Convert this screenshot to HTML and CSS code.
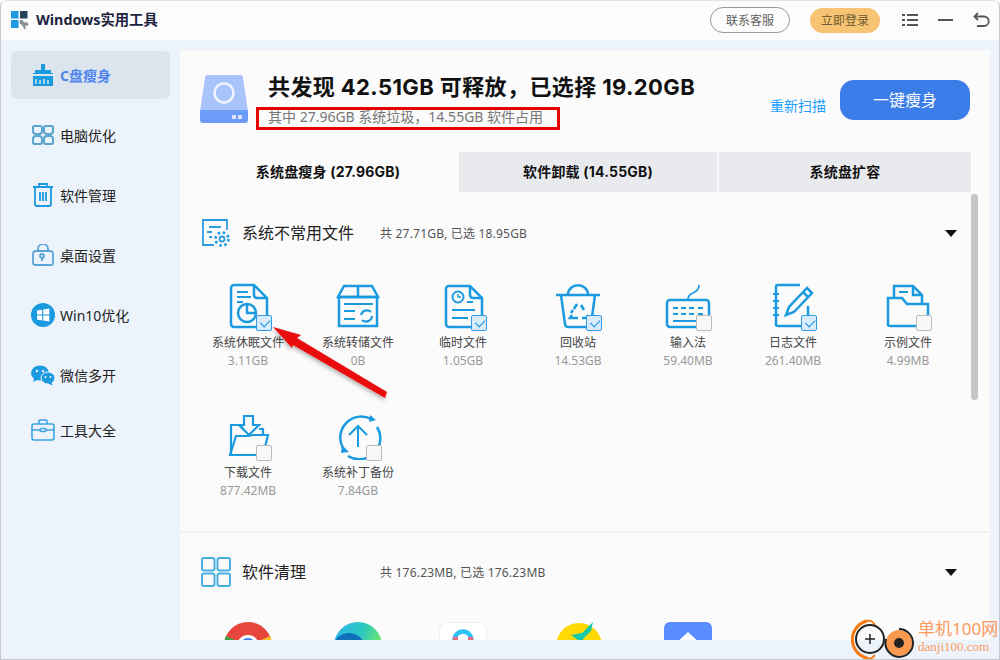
FILE: index.html
```html
<!DOCTYPE html>
<html lang="zh-CN">
<head>
  <meta charset="UTF-8">
  <title>Windows实用工具</title>
  <link rel="stylesheet" href="styles.css">
</head>
<body>
<div class="window">

  <header class="titlebar">
    <svg class="logo" width="20" height="20" viewBox="0 0 20 20">
      <rect x="1" y="1" width="7.5" height="7.5" fill="#1b9ae0"/>
      <rect x="10" y="1" width="7.5" height="7.5" fill="#23435f"/>
      <rect x="1" y="10" width="7.5" height="8" fill="#1b9ae0"/>
      <path d="M10 10l2 0 2.5 2.5 2-.5 2 2-1 2-2-.5-.5.5 1 2.500-1.500 1-2.500-4.500-2.500-1.500z" fill="#8a8f96"/>
    </svg>
    <span class="app-name">Windows实用工具</span>
    <a class="pill pill-line">联系客服</a>
    <a class="pill pill-gold">立即登录</a>
    <svg class="tb-icon" width="18" height="14" viewBox="0 0 18 14" fill="#555">
      <rect x="1" y="1" width="3" height="2"/><rect x="6" y="1" width="11" height="2"/>
      <rect x="1" y="6" width="3" height="2"/><rect x="6" y="6" width="11" height="2"/>
      <rect x="1" y="11" width="3" height="2"/><rect x="6" y="11" width="11" height="2"/>
    </svg>
    <svg class="tb-icon tb-min" width="16" height="14" viewBox="0 0 16 14"><rect x="0" y="6" width="15" height="2" fill="#555"/></svg>
    <svg class="tb-icon tb-back" width="17" height="16" viewBox="0 0 17 16" fill="none" stroke="#555" stroke-width="1.800">
      <path d="M5 1L1.500 4.500 5 8"/><path d="M2 4.500h9a4.500 4.500 0 0 1 0 9.500H4"/>
    </svg>
  </header>

  <div class="content">
    <nav class="sidebar">
      <a class="nav-item active">
        <svg width="22" height="24" viewBox="0 0 22 24"><path d="M9 1h4v6h6v3H3V7h6z" fill="#1b9ae0"/><path d="M1 10h20v13H1z" fill="#1b9ae0"/><path d="M4 21v-5M8 21v-4M12 21v-5M16 21v-4" stroke="#dbe6f0" stroke-width="1.500"/><rect x="1" y="11" width="20" height="2" fill="#dce4ed"/></svg>
        <span>C盘瘦身</span>
      </a>
      <a class="nav-item">
        <svg width="22" height="22" viewBox="0 0 22 22" fill="none" stroke="#5aa5cd" stroke-width="2"><path d="M2 2h6a2 2 0 0 1 2 2v3a3 3 0 0 1-3 3H4a3 3 0 0 1-3-3V3z"/><path d="M20 2h-6a2 2 0 0 0-2 2v3a3 3 0 0 0 3 3h3a3 3 0 0 0 3-3V3z"/><path d="M2 20h6a2 2 0 0 0 2-2v-3a3 3 0 0 0-3-3H4a3 3 0 0 0-3 3v4z"/><path d="M20 20h-6a2 2 0 0 1-2-2v-3a3 3 0 0 1 3-3h3a3 3 0 0 1 3 3v4z"/></svg>
        <span>电脑优化</span>
      </a>
      <a class="nav-item">
        <svg width="22" height="24" viewBox="0 0 22 24" fill="none" stroke="#1b9ae0" stroke-width="1.800"><path d="M1 4h20M7 4V1h8v3M3 4v17a2 2 0 0 0 2 2h12a2 2 0 0 0 2-2V4M8 9v9M11 9v9M14 9v9"/></svg>
        <span>软件管理</span>
      </a>
      <a class="nav-item">
        <svg width="22" height="22" viewBox="0 0 22 22" fill="none" stroke="#5aa5d8" stroke-width="1.800"><path d="M6 7V5a5 5 0 0 1 10 0v2"/><path d="M4 7h14a3 3 0 0 1 3 3v9a2 2 0 0 1-2 2H3a2 2 0 0 1-2-2v-9a3 3 0 0 1 3-3z"/><circle cx="10" cy="12" r="2"/><path d="M10 14v3"/></svg>
        <span>桌面设置</span>
      </a>
      <a class="nav-item">
        <svg class="nav-win" width="24" height="24" viewBox="0 0 24 24"><circle cx="12" cy="12" r="12" fill="#1b9ae0"/><path d="M6 7.500l5.200-.8v4.800H6zM12.300 6.500l6-.9v5.900h-6zM6 12.600h5.200v4.800L6 16.600zM12.300 12.600h6v5.900l-6-.9z" fill="#fff"/></svg>
        <span>Win10优化</span>
      </a>
      <a class="nav-item">
        <svg class="nav-win" width="24" height="21" viewBox="0 0 24 21" fill="#1b9ae0"><ellipse cx="9" cy="8" rx="9" ry="7.500"/><path d="M3 12l-.5 5 5-3z"/><ellipse cx="17" cy="13" rx="7" ry="6" stroke="#edf3fb" stroke-width="1"/><path d="M20 17l2 3.500-5-2z"/><circle cx="6" cy="6" r="1.200" fill="#edf3fb"/><circle cx="12" cy="6" r="1.200" fill="#edf3fb"/><circle cx="14.500" cy="12" r="1" fill="#edf3fb"/><circle cx="19.500" cy="12" r="1" fill="#edf3fb"/></svg>
        <span>微信多开</span>
      </a>
      <a class="nav-item nav-last">
        <svg class="nav-win" width="24" height="22" viewBox="0 0 24 22" fill="none" stroke="#3aa5e5" stroke-width="1.600"><path d="M8 5V2a1 1 0 0 1 1-1h6a1 1 0 0 1 1 1v3"/><rect x="1" y="5" width="22" height="16" rx="2"/><path d="M1 11h8M15 11h8"/><rect x="9" y="9.500" width="6" height="3" rx="1.500"/></svg>
        <span>工具大全</span>
      </a>
    </nav>

    <main class="main">
      <section class="summary">
        <svg class="disk" width="48" height="48" viewBox="0 0 48 48">
          <path d="M5 3a3 3 0 0 1 3-3h32a3 3 0 0 1 3 3l5 33H0z" fill="#a9c4fb"/>
          <path d="M0 35h48v10a3 3 0 0 1-3 3H3a3 3 0 0 1-3-3z" fill="#6c9cf8"/>
          <circle cx="24" cy="18" r="9.500" fill="none" stroke="#f0f4fd" stroke-width="2.500"/>
          <rect x="32" y="40" width="4" height="4" fill="#dbe6fd"/><rect x="38" y="40" width="4" height="4" fill="#dbe6fd"/>
        </svg>
        <div class="summary-text">
          <h1>共发现 42.51GB 可释放，已选择 19.20GB</h1>
          <p>其中 27.96GB 系统垃圾，14.55GB 软件占用</p>
        </div>
        <a class="rescan">重新扫描</a>
        <button class="slim-btn">一键瘦身</button>
      </section>

      <div class="tabs">
        <div class="tab tab-on">系统盘瘦身 (27.96GB)</div>
        <div class="tab tab-mid">软件卸载 (14.55GB)</div>
        <div class="tab tab-end">系统盘扩容</div>
      </div>

      <section class="group">
        <div class="group-head">
          <svg class="group-icon" width="30" height="30" viewBox="0 0 30 30" fill="none" stroke="#2a9de0" stroke-width="1.800">
            <path d="M13 27H2V2h24v10"/><path d="M8 9h12M6 14h5M8 19h3"/>
            <circle cx="21" cy="21" r="2.500"/><circle cx="21" cy="21" r="6.500" stroke-width="2.800" stroke-dasharray="2.500 2.600"/>
          </svg>
          <h2>系统不常用文件</h2>
          <span class="group-meta">共 27.71GB, 已选 18.95GB</span>
          <i class="caret"></i>
        </div>

        <div class="file-grid">
          <div class="file">
            <div class="file-icon">
              <svg width="48" height="48" viewBox="0 0 48 48" fill="none" stroke="#1b9ae0" stroke-width="2.500">
                <path d="M10 3h20l13 13v26a3 3 0 0 1-3 3H10a3 3 0 0 1-3-3V6a3 3 0 0 1 3-3z"/><path d="M30 3v10a3 3 0 0 0 3 3h10"/>
                <path d="M13 10h11M13 15h14M13 20h6" stroke-width="2"/>
                <circle cx="23" cy="31" r="9"/><path d="M23 22v9h9"/>
              </svg>
              <span class="check on"></span>
            </div>
            <div class="file-name">系统休眠文件</div>
            <div class="file-size">3.11GB</div>
          </div>
          <div class="file">
            <div class="file-icon">
              <svg width="48" height="48" viewBox="0 0 48 48" fill="none" stroke="#1b9ae0" stroke-width="2.500">
                <path d="M10 4h28l6 11H4z"/><path d="M24 4v11"/><path d="M5 15h38v29H5z"/>
                <path d="M10 22h29M10 29h11M10 37h11" stroke-width="2.200"/>
                <path d="M27 33a6 6 0 0 1 10-3M38 34a6 6 0 0 1-10 4" stroke-width="2.200"/>
              </svg>
            </div>
            <div class="file-name">系统转储文件</div>
            <div class="file-size">0B</div>
          </div>
          <div class="file tight">
            <div class="file-icon">
              <svg width="48" height="48" viewBox="0 0 48 48" fill="none" stroke="#1b9ae0" stroke-width="2.500">
                <path d="M10 4h21l12 12v26a3 3 0 0 1-3 3H10a3 3 0 0 1-3-3V7a3 3 0 0 1 3-3z"/><path d="M31 4v9a3 3 0 0 0 3 3h9"/>
                <circle cx="19" cy="15" r="5.500" stroke-width="2"/><path d="M19 12v3h3" stroke-width="1.500"/>
                <path d="M28 20h6M13 28h23M13 36h16" stroke-width="2.200"/>
              </svg>
              <span class="check on"></span>
            </div>
            <div class="file-name">临时文件</div>
            <div class="file-size">1.05GB</div>
          </div>
          <div class="file">
            <div class="file-icon">
              <svg width="48" height="48" viewBox="0 0 48 48" fill="none" stroke="#1b9ae0" stroke-width="2.500">
                <path d="M2 13h44"/><path d="M14 13c0-13 20-13 20 0"/><path d="M7 13l4 29a3 3 0 0 0 3 3h20a3 3 0 0 0 3-3l4-29"/>
                <path d="M23 22l-3 5M27 23l3 5M18 33l-2 3h8M33 33l1 3h-6M17 31l2-3" stroke-width="2.500"/>
              </svg>
              <span class="check on"></span>
            </div>
            <div class="file-name">回收站</div>
            <div class="file-size">14.53GB</div>
          </div>
          <div class="file">
            <div class="file-icon">
              <svg width="48" height="48" viewBox="0 0 48 48" fill="none" stroke="#1b9ae0" stroke-width="2.500">
                <path d="M24 17c0-8 11-4 11-14" stroke-width="1.800"/>
                <rect x="3" y="18" width="42" height="27" rx="3"/>
                <path d="M9 26h5M17 26h5M25 26h5M34 26h5M9 32h5M17 32h5M25 32h5M34 32h5M9 39h30" stroke-width="2"/>
              </svg>
              <span class="check"></span>
            </div>
            <div class="file-name">输入法</div>
            <div class="file-size">59.40MB</div>
          </div>
          <div class="file tight">
            <div class="file-icon">
              <svg width="48" height="48" viewBox="0 0 48 48" fill="none" stroke="#1b9ae0" stroke-width="2.500">
                <path d="M31 3H9a2 2 0 0 0-2 2v37a2 2 0 0 0 2 2h28a2 2 0 0 0 2-2V24"/>
                <path d="M4 12h6M4 19h6M4 26h6M4 33h6" stroke-width="2"/>
                <path d="M38 6l5 5-18 19-8 3 3-8z"/><path d="M34 10l5 5"/>
              </svg>
              <span class="check on"></span>
            </div>
            <div class="file-name">日志文件</div>
            <div class="file-size">261.40MB</div>
          </div>
          <div class="file">
            <div class="file-icon">
              <svg width="48" height="48" viewBox="0 0 48 48" fill="none" stroke="#1b9ae0" stroke-width="2.500">
                <path d="M10 15V4h19l9 9v8"/><path d="M29 4v9h9"/>
                <path d="M15 10h9" stroke-width="2"/>
                <path d="M4 16h14l5 6h21v20a2 2 0 0 1-2 2H6a2 2 0 0 1-2-2z"/>
              </svg>
              <span class="check"></span>
            </div>
            <div class="file-name">示例文件</div>
            <div class="file-size">4.99MB</div>
          </div>
          <div class="file">
            <div class="file-icon">
              <svg width="48" height="48" viewBox="0 0 48 48" fill="none" stroke="#1b9ae0" stroke-width="2.200">
                <path d="M20 4h9v9h6l-10 10-10-10h5z"/>
                <path d="M7 43V13h9l4 5"/><path d="M35 17h4v6"/><path d="M6 43l6-19h12l5-1h15l-5 20z"/>
              </svg>
              <span class="check"></span>
            </div>
            <div class="file-name">下载文件</div>
            <div class="file-size">877.42MB</div>
          </div>
          <div class="file">
            <div class="file-icon">
              <svg width="48" height="48" viewBox="0 0 48 48" fill="none" stroke="#1b9ae0" stroke-width="2.500">
                <path d="M9 36A21 21 0 0 1 37 7M43 15a21 21 0 0 1-29 29"/>
                <path d="M36 3l6 5-7 2zM8 33l7 7-8 1z" fill="#1b9ae0" stroke="none"/>
                <path d="M24 35V14M15 23l9-9 9 9" stroke-width="2"/>
              </svg>
              <span class="check"></span>
            </div>
            <div class="file-name">系统补丁备份</div>
            <div class="file-size">7.84GB</div>
          </div>
        </div>
      </section>

      <section class="group group-soft">
        <div class="group-head">
          <svg class="group-icon" width="30" height="30" viewBox="0 0 30 30" fill="none" stroke="#4aaee0" stroke-width="2">
            <rect x="1" y="1" width="12.500" height="12.500" rx="2"/><rect x="16.500" y="1" width="12.500" height="12.500" rx="2"/>
            <rect x="1" y="16.500" width="12.500" height="12.500" rx="2"/><rect x="16.500" y="16.500" width="12.500" height="12.500" rx="2"/>
          </svg>
          <h2>软件清理</h2>
          <span class="group-meta">共 176.23MB, 已选 176.23MB</span>
          <i class="caret"></i>
        </div>
        <div class="app-row">
          <svg width="48" height="48" viewBox="0 0 48 48">
            <circle cx="24" cy="24" r="24" fill="#e8453c"/>
            <path d="M24 24L46 14a24 24 0 0 1-8 30z" fill="#fbc02d"/>
            <path d="M24 24L2 14a24 24 0 0 0 20 34z" fill="#43a047"/>
            <circle cx="24" cy="24" r="11" fill="#fff"/><circle cx="24" cy="24" r="8" fill="#3b7ded"/>
          </svg>
          <svg width="48" height="48" viewBox="0 0 48 48">
            <defs><linearGradient id="edge" x1="0" y1="0" x2="1" y2="0.300"><stop offset="0" stop-color="#2bb5ee"/><stop offset="0.600" stop-color="#2dc8c0"/><stop offset="1" stop-color="#6fe66c"/></linearGradient></defs>
            <circle cx="24" cy="24" r="24" fill="url(#edge)"/><ellipse cx="15" cy="24" rx="15" ry="13" fill="#0f6fb8"/>
          </svg>
          <svg width="48" height="48" viewBox="0 0 48 48">
            <rect x="0.500" y="0.500" width="47" height="47" rx="8" fill="#fff" stroke="#eee"/>
            <circle cx="24" cy="18" r="8.500" fill="none" stroke="#2cc0f5" stroke-width="4.500"/>
            <path d="M14 15h5v3h-5zM29 15h5v3h-5z" fill="#f06a7a"/>
          </svg>
          <svg width="48" height="48" viewBox="0 0 48 48">
            <circle cx="23" cy="24" r="23" fill="#ffd900"/>
            <path d="M37 0l-2 9-8 8 3 7-15-11 11-2z" fill="#16c9a8"/>
          </svg>
          <svg width="48" height="48" viewBox="0 0 48 48">
            <rect width="48" height="48" rx="6" fill="#5b8cff"/><path d="M24 10l12 11H12z" fill="#fff"/>
          </svg>
        </div>
      </section>
    </main>
  </div>

  <!-- scrollbar and the annotations lie over the page -->
  <div class="scroll-thumb"></div>
  <div class="red-box"></div>
  <svg class="red-arrow" width="130" height="90" viewBox="0 0 130 90">
    <defs><filter id="shade" x="-20%" y="-20%" width="140%" height="140%"><feDropShadow dx="-1" dy="2" stdDeviation="2" flood-color="#000" flood-opacity="0.300"/></filter></defs>
    <path d="M3 3L31 11 27 14 117 68 115 74 23 21 22 24z" fill="#ea0b0b" filter="url(#shade)"/>
  </svg>
  <div class="mark">
    <svg width="68" height="46" viewBox="0 0 68 46" fill="none">
      <path d="M16 3A19 19 0 0 0 16 40" stroke="#f97a10" stroke-width="3"/>
      <path d="M16 3a7 7 0 0 1 8 4M16 40a7 7 0 0 0 8-3" stroke="#f97a10" stroke-width="2"/>
      <circle cx="19" cy="21" r="14" stroke="#222" stroke-width="2"/>
      <path d="M14 21h10M19 16v10" stroke="#222" stroke-width="1.500"/>
      <circle cx="48" cy="25" r="13" fill="#fb9a4f"/>
      <path d="M48 11a14 14 0 0 1 0 28 14 14 0 0 1-13-18" stroke="#222" stroke-width="2"/>
      <circle cx="48" cy="25" r="5" fill="#222"/>
    </svg>
    <div class="mark-text">
      <b>单机100网</b>
      <span>danji100.com</span>
    </div>
  </div>
</div>
</body>
</html>
```

FILE: styles.css
```css
* {
  box-sizing: border-box;
}

html, body {
  margin: 0;
  height: 100%;
  background: #fff;
  overflow: hidden;
}

body {
  font-family: "Noto Sans", "Noto Sans CJK SC", sans-serif;
  color: #222;
}

.window {
  position: relative;
  width: 1000px;
  height: 660px;
  display: flex;
  flex-direction: column;
  background: #edf3fb;
  border: 1px solid #c4c8d0;
  border-top-color: #e4e4e4;
  border-radius: 6px 6px 0 0;
  overflow: hidden;
}

/* title bar */
.titlebar {
  height: 39px;
  flex: none;
  display: flex;
  align-items: center;
  padding: 0 0 1px 9px;
  background: #fcfcfc;
}

.logo {
  margin-right: 6px;
}

.app-name {
  font-size: 14.300px;
  font-weight: 700;
  color: #1c2440;
  margin-right: auto;
  padding-bottom: 3px;
}

.pill {
  display: flex;
  align-items: center;
  justify-content: center;
  font-size: 12px;
  border-radius: 13px;
  padding-bottom: 1px;
}

.pill-line {
  width: 80px;
  height: 26px;
  border: 1px solid #999;
  color: #5f5f5f;
  margin-right: 20px;
}

.pill-gold {
  width: 70px;
  height: 25px;
  background: #f7c473;
  color: #6e5a30;
  margin-right: 21px;
}

.tb-min {
  margin-left: 19px;
}

.tb-back {
  margin-left: 19px;
  margin-right: 9px;
}

/* left nav */
.content {
  flex: 1;
  display: flex;
  min-height: 0;
}

.sidebar {
  width: 179px;
  flex: none;
  padding: 11px 10px 0;
  display: flex;
  flex-direction: column;
  gap: 12px;
}

.nav-item {
  height: 48px;
  display: flex;
  align-items: center;
  gap: 6px;
  padding-left: 21px;
  font-size: 14px;
  border-radius: 6px;
  color: #222;
}

.nav-item span {
  padding-bottom: 1px;
}

.nav-item svg {
  flex: none;
}

.nav-win {
  margin-left: -1px;
  margin-right: -1px;
}

.nav-item.active {
  background: #dce4ed;
  color: #4f86ee;
  font-weight: 700;
}

.nav-last {
  margin-top: -5px;
}

/* main panel */
.main {
  width: 810px;
  height: 590px;
  margin-top: 10px;
  background: #fbfbfb;
  overflow: hidden;
}

.summary {
  height: 102px;
  display: flex;
  padding: 25px 20px 0;
}

.disk {
  flex: none;
  margin-right: 20px;
}

.summary-text h1 {
  margin: 0;
  font-family: "Inter", "Noto Sans CJK SC", sans-serif;
  font-size: 22px;
  line-height: 24px;
  letter-spacing: .4px;
  font-weight: 700;
  color: #111;
}

.summary-text p {
  margin: 9px 0 0;
  font-size: 14px;
  line-height: 18px;
  color: #777;
}

.rescan {
  margin-left: auto;
  margin-top: 21px;
  font-size: 14px;
  line-height: 20px;
  height: 20px;
  color: #1e9fff;
}

.slim-btn {
  width: 130px;
  height: 40px;
  margin: 5px 0 0 14px;
  padding: 0 0 2px;
  border: 0;
  border-radius: 14px;
  background: #3a7de8;
  color: #fff;
  font-family: inherit;
  font-size: 16px;
}

.tabs {
  height: 40px;
  display: flex;
  margin-left: 17px;
}

.tab {
  flex: none;
  display: flex;
  align-items: center;
  justify-content: center;
  background: #e9eaee;
  font-family: "Inter", "Noto Sans CJK SC", sans-serif;
  font-size: 14px;
  letter-spacing: .2px;
  font-weight: 700;
  color: #111;
  padding-bottom: 2px;
}

.tab-on {
  width: 262px;
  background: none;
}

.tab-mid {
  width: 258px;
  margin-right: 2px;
}

.tab-end {
  width: 252px;
}

/* groups */
.group {
  padding-top: 26px;
}

.group-soft {
  margin-top: 33px;
  padding-top: 24px;
  border-top: 2px solid #f1f1f1;
}

.group-head {
  display: flex;
  align-items: center;
  height: 30px;
  padding-left: 21px;
}

.group-icon {
  flex: none;
  margin-right: 11px;
}

.group-head h2 {
  margin: 0;
  width: 138px;
  padding-bottom: 3px;
  font-size: 16px;
  font-weight: 400;
  color: #222;
}

.group-meta {
  font-size: 12px;
  letter-spacing: .2px;
  color: #555;
}

.caret {
  margin-left: auto;
  margin-right: 33px;
  border-left: 6px solid transparent;
  border-right: 6px solid transparent;
  border-top: 7px solid #111;
}

.file-grid {
  display: grid;
  grid-template-columns: repeat(7, 110px);
  row-gap: 44px;
  margin: 34px 0 0 13px;
}

.file {
  height: 86px;
  display: flex;
  flex-direction: column;
  align-items: center;
}

.file.tight {
  margin-left: -10px;
}

.file-icon {
  position: relative;
  width: 48px;
  height: 48px;
  margin-bottom: 5px;
}

.file-icon svg {
  display: block;
}

.check {
  position: absolute;
  left: 32px;
  top: 33px;
  width: 16px;
  height: 16px;
  background: #f8f8f8;
  border: 1px solid #bbb;
  border-radius: 2px;
}

.check.on {
  background: #d8ecfb;
  border-color: #2f9be8;
}

.check.on::after {
  content: "";
  position: absolute;
  left: 3px;
  top: 1px;
  width: 8px;
  height: 5px;
  transform: rotate(-45deg) translate(-1px, 2px);
  border-left: 1.500px solid #1b8fe0;
  border-bottom: 1.500px solid #1b8fe0;
}

.file-name {
  font-size: 12px;
  line-height: 16px;
  color: #444;
  white-space: nowrap;
}

.file-size {
  margin-top: 2px;
  font-size: 12px;
  line-height: 16px;
  color: #999;
}

.app-row {
  display: grid;
  grid-template-columns: 110px 105px 117px 108px 48px;
  margin: 35px 0 0 44px;
}

/* things over the page */
.scroll-thumb {
  position: absolute;
  left: 970px;
  top: 193px;
  width: 7px;
  height: 206px;
  border-radius: 4px;
  background: #c6c6c6;
}

.red-box {
  position: absolute;
  left: 255px;
  top: 106px;
  width: 304px;
  height: 23px;
  border: 3px solid #e60000;
}

.red-arrow {
  position: absolute;
  left: 269px;
  top: 323px;
}

.mark {
  position: absolute;
  left: 850px;
  top: 617px;
  display: flex;
}

.mark-text {
  margin-left: -1px;
  display: flex;
  flex-direction: column;
  color: #fb9a60;
}

.mark-text b {
  font-size: 17px;
  line-height: 21px;
  font-weight: 400;
  white-space: nowrap;
}

.mark-text span {
  font-family: "Liberation Serif", serif;
  font-size: 13px;
  line-height: 14px;
  margin-top: 1px;
  white-space: nowrap;
}
```
